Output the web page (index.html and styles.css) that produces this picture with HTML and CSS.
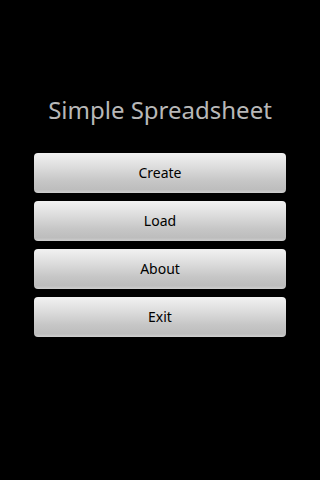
FILE: index.html
```html
<!DOCTYPE html>
<html>
<head>
<meta charset="utf-8">
<link rel="stylesheet" href="styles.css">
</head>
<body>
<div class="screen">
  <h1 class="title">Simple Spreadsheet</h1>
  <div class="menu">
    <button class="btn">Create</button>
    <button class="btn">Load</button>
    <button class="btn">About</button>
    <button class="btn">Exit</button>
  </div>
</div>
</body>
</html>
```
FILE: styles.css
```css
html, body {
  margin: 0;
  padding: 0;
  background: #000;
  width: 320px;
  height: 480px;
  overflow: hidden;
}
.screen {
  display: flex;
  flex-direction: column;
  align-items: center;
  padding-top: 93px;
  font-family: "Noto Sans", "Open Sans", sans-serif;
}
.title {
  margin: 0;
  font-size: 24px;
  font-weight: normal;
  color: #b8b8b8;
  line-height: 33px;
}
.menu {
  display: flex;
  flex-direction: column;
  gap: 8px;
  margin-top: 27px;
  width: 252px;
}
.btn {
  height: 40px;
  border: none;
  border-radius: 4px;
  background: linear-gradient(to bottom, #f2f2f2 0%, #e0e0e0 30%, #c6c6c6 70%, #bdbdbd 92%, #cfcfcf 100%);
  font-family: "Noto Sans", "Open Sans", sans-serif;
  font-size: 14px;
  color: #000;
  padding: 0 0 2px 0;
}
```
